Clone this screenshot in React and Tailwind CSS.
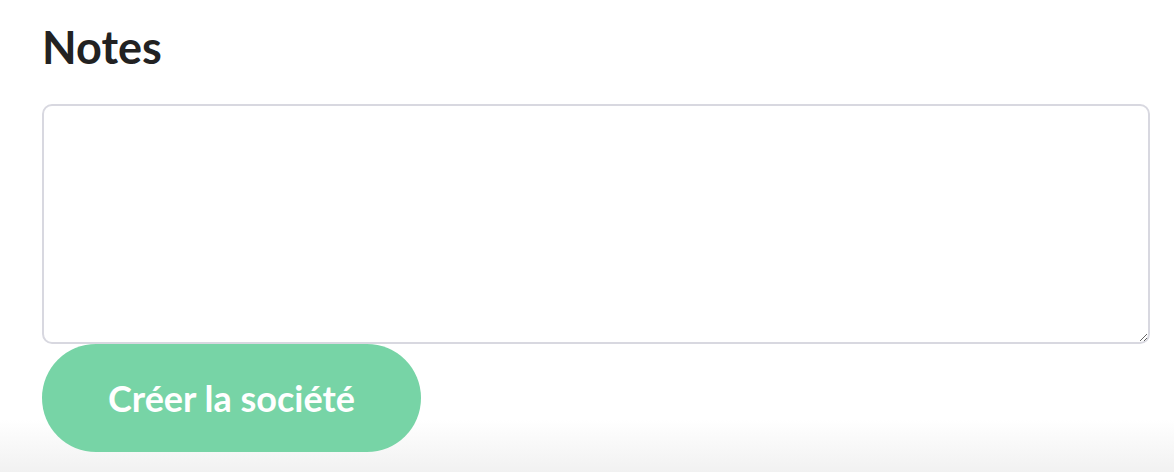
export default function App() {
  return (
    <div className="h-[472px] w-full overflow-hidden bg-[linear-gradient(to_bottom,#ffffff_420px,#f1f1f1_472px)] pl-[42px] pr-[24px] font-['Lato',sans-serif]">
      <h2 className="pt-[17px] text-[45px] font-bold leading-[60px] text-[#222222]">Notes</h2>
      <textarea className="mt-[27px] block h-[240px] w-full rounded-[10px] border-2 border-[#d8d8e0] bg-white" />
      <button className="block h-[108px] w-[379px] rounded-full bg-[#77d4a6] text-[36px] font-bold text-white">
        Créer la société
      </button>
    </div>
  );
}
